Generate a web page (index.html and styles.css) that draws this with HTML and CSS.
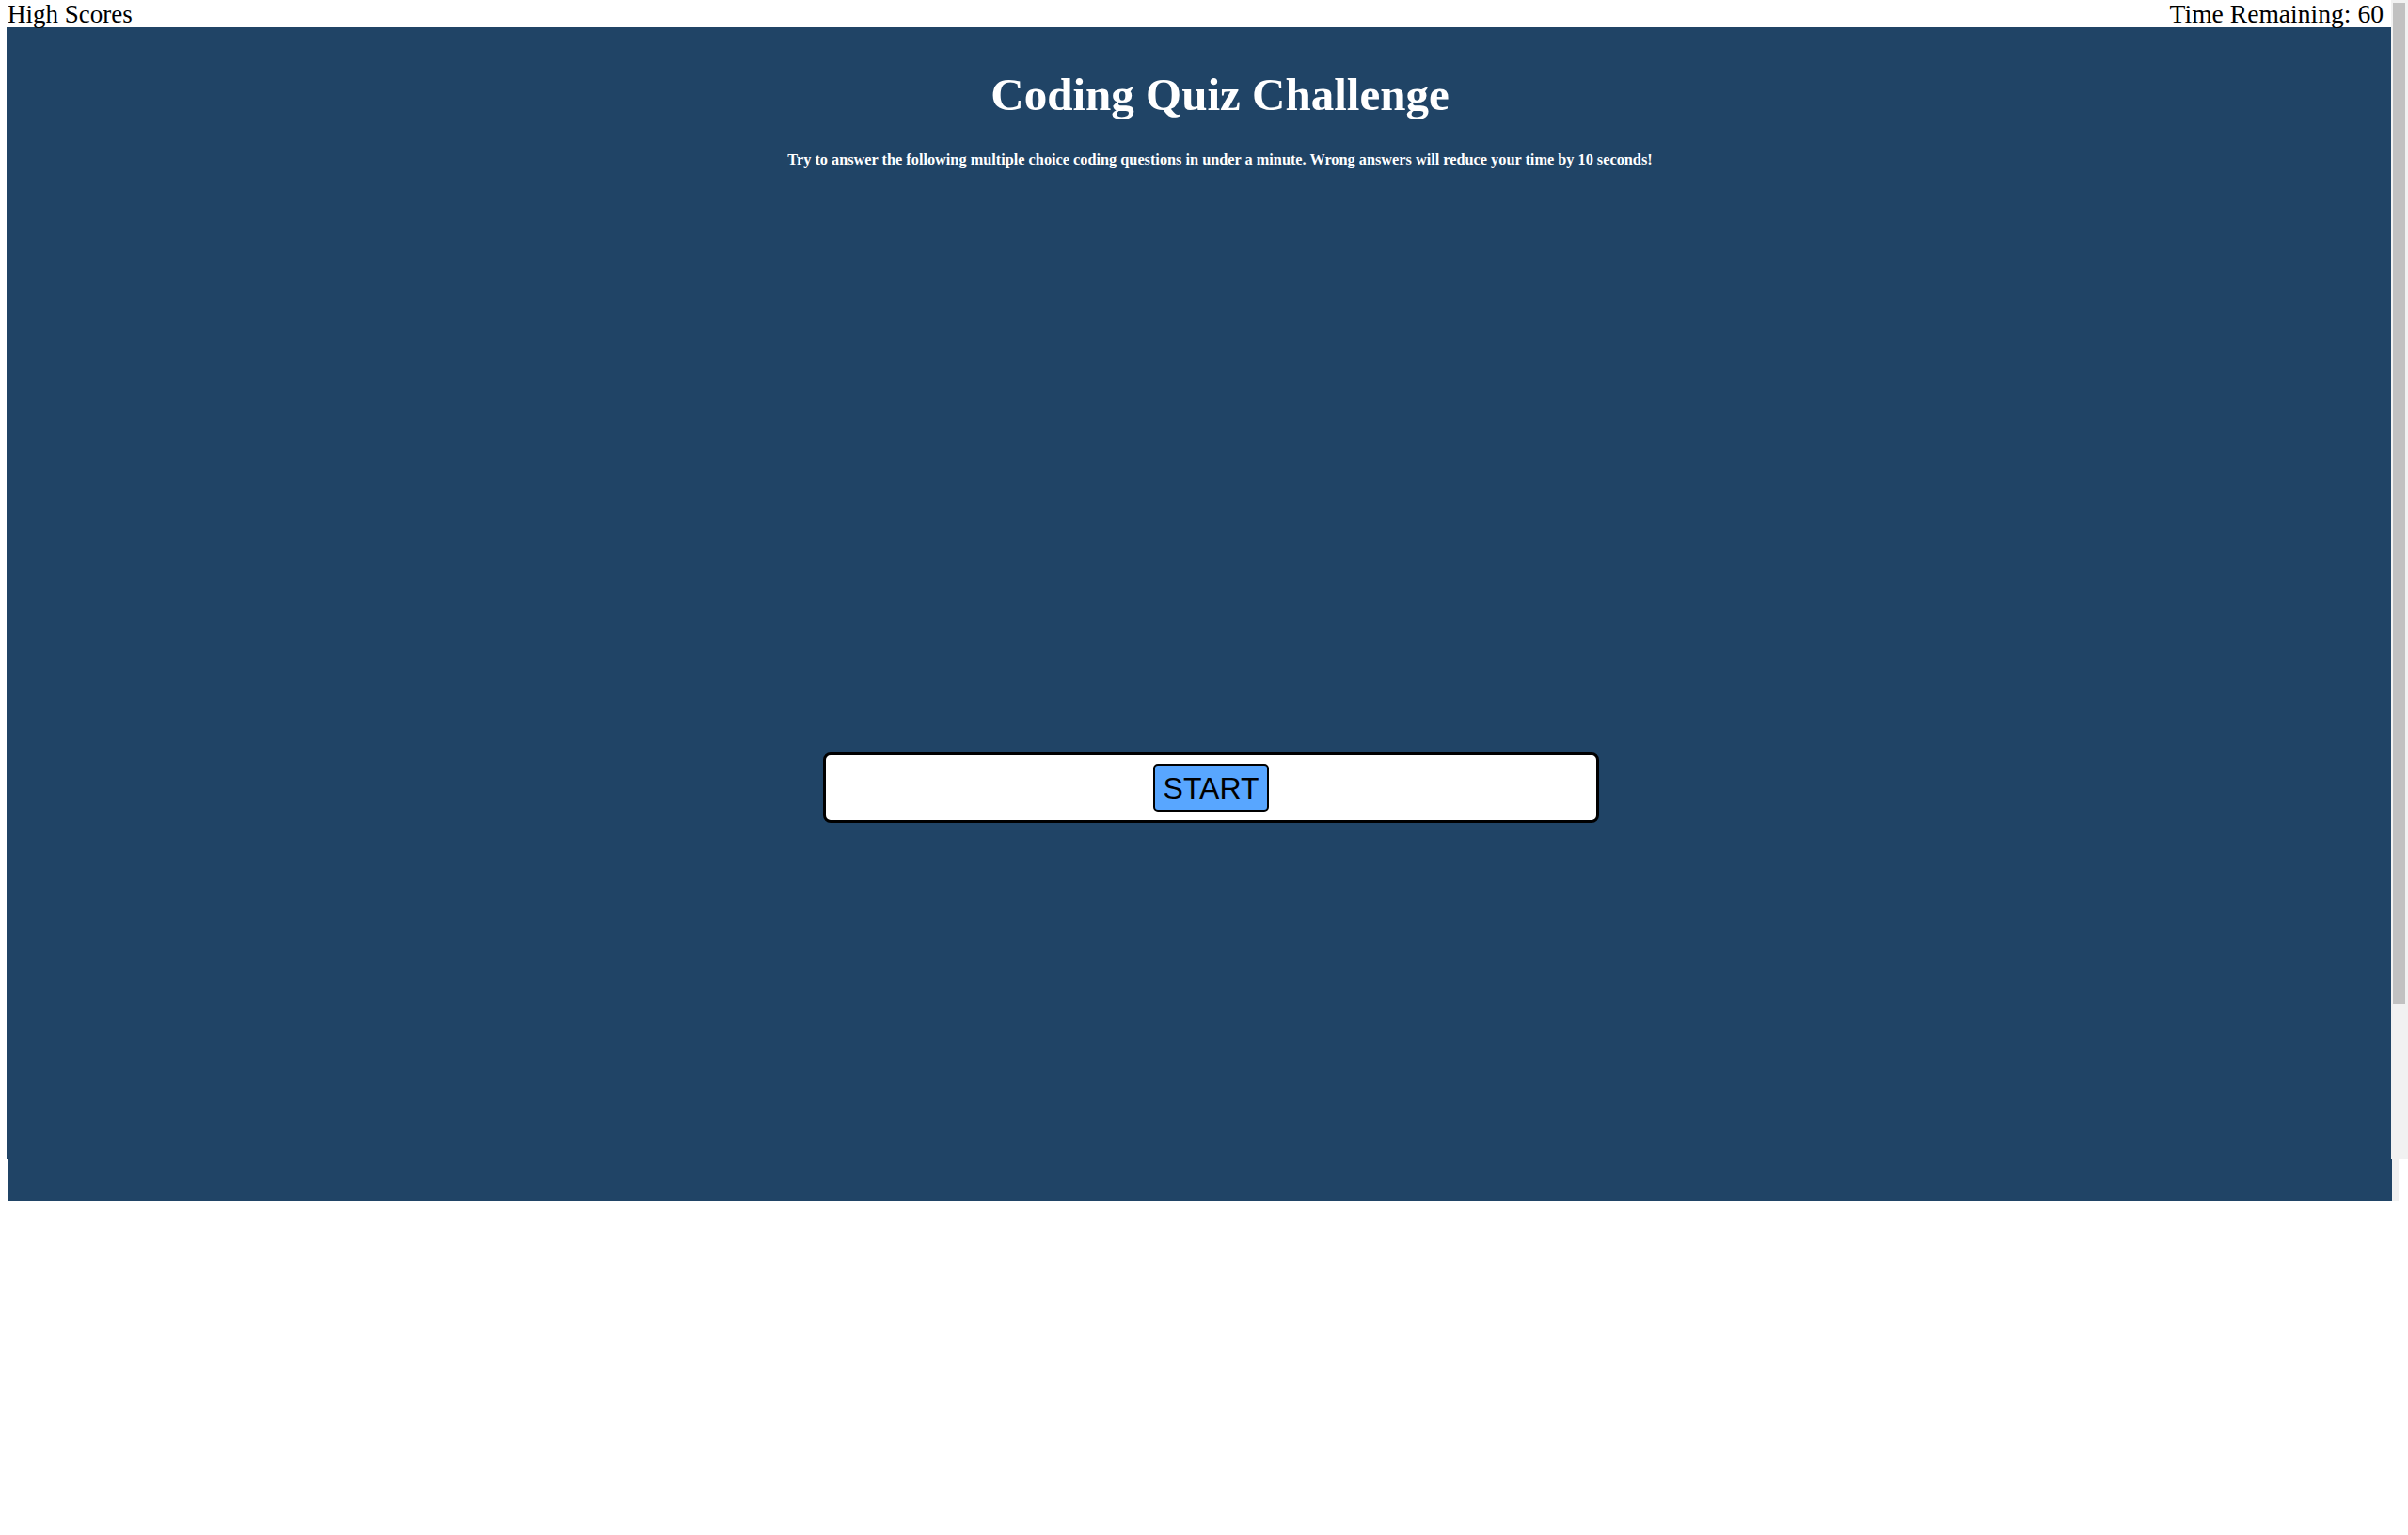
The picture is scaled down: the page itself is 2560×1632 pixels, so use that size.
FILE: index.html
```html
<!DOCTYPE html>
<html lang="en">
<head>
<meta charset="utf-8">
<title>Coding Quiz Challenge</title>
<link rel="stylesheet" href="styles.css">
</head>
<body>
<div class="viewport">
  <div class="content">
    <header class="topbar">
      <span class="topbar-link">High Scores</span>
      <span class="timer">Time Remaining: 60</span>
    </header>
    <main class="main">
      <section class="intro">
        <h1 class="title">Coding Quiz Challenge</h1>
        <p class="subtitle">Try to answer the following multiple choice coding questions in under a minute. Wrong answers will reduce your time by 10 seconds!</p>
      </section>
      <section class="stage">
        <div class="card">
          <button class="start-btn" type="button">START</button>
        </div>
      </section>
    </main>
  </div>
  <div class="scrollbar"><div class="scroll-thumb"></div></div>
</div>
<div class="bottom-strip"><div class="strip-fill"></div><div class="strip-track"></div></div>
</body>
</html>
```

FILE: styles.css
```css
html, body {
  margin: 0;
  padding: 0;
  background: #ffffff;
}

.viewport {
  margin-left: 7px;
  height: 1232px;
  display: flex;
  overflow: hidden;
}

.content {
  flex: 1;
  min-width: 0;
  overflow: hidden;
}

.scrollbar {
  width: 18px;
  flex: none;
  background: #f1f1f1;
  padding: 3px 3px 0 2px;
  box-sizing: border-box;
}

.scroll-thumb {
  height: 1064px;
  background: #c1c1c1;
}

.topbar {
  display: flex;
  justify-content: space-between;
  align-items: flex-start;
  height: 29px;
  padding-right: 8px;
  font-family: "Liberation Serif", "Times New Roman", serif;
  font-size: 27px;
  line-height: 30px;
  color: #000000;
}

.topbar-link {
  padding-left: 1px;
}

.timer {
  font-size: 27.6px;
}

.main {
  background: #204466;
  height: 1203px;
  display: flex;
  flex-direction: column;
}

.intro {
  padding-top: 44px;
  padding-left: 45px;
  text-align: center;
  color: #ffffff;
  font-family: "Liberation Serif", "Times New Roman", serif;
}

.title {
  margin: 0;
  font-size: 49px;
  line-height: 56px;
  font-weight: bold;
}

.subtitle {
  margin: 31px 0 0 0;
  font-size: 16.3px;
  line-height: 20px;
  font-weight: bold;
}

.stage {
  padding-top: 620px;
  padding-left: 26px;
  display: flex;
  justify-content: center;
}

.card {
  box-sizing: border-box;
  width: 825px;
  height: 75px;
  background: #ffffff;
  border: 3px solid #000000;
  border-radius: 8px;
  display: flex;
  align-items: center;
  justify-content: center;
}

.start-btn {
  box-sizing: border-box;
  height: 51px;
  padding: 0 9px;
  background: #58a6ff;
  border: 2px solid #000000;
  border-radius: 5px;
  font-family: "Liberation Sans", Arial, sans-serif;
  font-size: 32px;
  line-height: 1;
  color: #000000;
}

.bottom-strip {
  display: flex;
  height: 45px;
  margin-left: 8px;
}

.strip-fill {
  width: 2535px;
  background: #204466;
}

.strip-track {
  width: 7px;
  background: #f1f1f1;
}
```
